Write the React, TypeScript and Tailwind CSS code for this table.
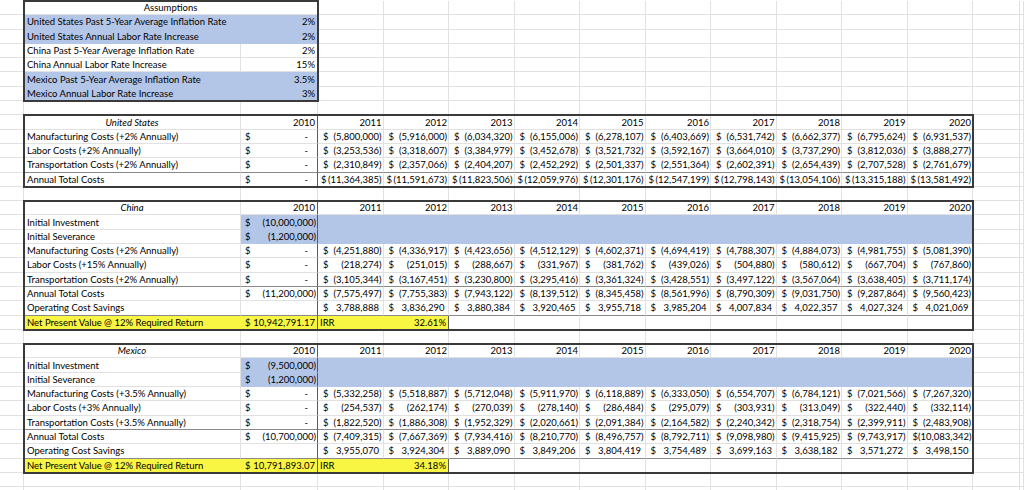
import React from "react";
import { twMerge } from "tailwind-merge";

const YEARS = [2011, 2012, 2013, 2014, 2015, 2016, 2017, 2018, 2019, 2020];
const BLUE = "bg-[#b4c6e7] border-[#b4c6e7]";
const YELLOW = "bg-[#f9f643] border-[#f9f643]";
const SPLIT = "border-r-[#5a5a5a]";
const RULE = "border-b-[#8a8a8a]";
const TABLE =
  "grid grid-cols-[217px_77px_repeat(10,65.5px)] auto-rows-[14.3px] bg-white outline-2 -outline-offset-1 outline-[#3a3a3a]";

type Money = number | "-" | string;

type Country = {
  title: string;
  invest?: number;
  severance?: number;
  costs: { label: string; base: Money; vals: number[] }[];
  total: { base: Money; vals: number[] };
  savings?: number[];
  npv?: string;
  irr?: string;
};

const assumptions = [
  { label: "United States Past 5-Year Average Inflation Rate", value: "2%", blue: true },
  { label: "United States Annual Labor Rate Increase", value: "2%", blue: true },
  { label: "China Past 5-Year Average Inflation Rate", value: "2%", blue: false },
  { label: "China Annual Labor Rate Increase", value: "15%", blue: false },
  { label: "Mexico Past 5-Year Average Inflation Rate", value: "3.5%", blue: true },
  { label: "Mexico Annual Labor Rate Increase", value: "3%", blue: true },
];

const neg = (xs: number[]) => xs.map((x) => -x);

const unitedStates: Country = {
  title: "United States",
  costs: [
    {
      label: "Manufacturing Costs (+2% Annually)",
      base: "-",
      vals: neg([5800000, 5916000, 6034320, 6155006, 6278107, 6403669, 6531742, 6662377, 6795624, 6931537]),
    },
    {
      label: "Labor Costs (+2% Annually)",
      base: "-",
      vals: neg([3253536, 3318607, 3384979, 3452678, 3521732, 3592167, 3664010, 3737290, 3812036, 3888277]),
    },
    {
      label: "Transportation Costs (+2% Annually)",
      base: "-",
      vals: neg([2310849, 2357066, 2404207, 2452292, 2501337, 2551364, 2602391, 2654439, 2707528, 2761679]),
    },
  ],
  total: {
    base: "-",
    vals: neg([11364385, 11591673, 11823506, 12059976, 12301176, 12547199, 12798143, 13054106, 13315188, 13581492]),
  },
};

const china: Country = {
  title: "China",
  invest: -10000000,
  severance: -1200000,
  costs: [
    {
      label: "Manufacturing Costs (+2% Annually)",
      base: "-",
      vals: neg([4251880, 4336917, 4423656, 4512129, 4602371, 4694419, 4788307, 4884073, 4981755, 5081390]),
    },
    {
      label: "Labor Costs (+15% Annually)",
      base: "-",
      vals: neg([218274, 251015, 288667, 331967, 381762, 439026, 504880, 580612, 667704, 767860]),
    },
    {
      label: "Transportation Costs (+2% Annually)",
      base: "-",
      vals: neg([3105344, 3167451, 3230800, 3295416, 3361324, 3428551, 3497122, 3567064, 3638405, 3711174]),
    },
  ],
  total: {
    base: -11200000,
    vals: neg([7575497, 7755383, 7943122, 8139512, 8345458, 8561996, 8790309, 9031750, 9287864, 9560423]),
  },
  savings: [3788888, 3836290, 3880384, 3920465, 3955718, 3985204, 4007834, 4022357, 4027324, 4021069],
  npv: "10,942,791.17",
  irr: "32.61%",
};

const mexico: Country = {
  title: "Mexico",
  invest: -9500000,
  severance: -1200000,
  costs: [
    {
      label: "Manufacturing Costs (+3.5% Annually)",
      base: "-",
      vals: neg([5332258, 5518887, 5712048, 5911970, 6118889, 6333050, 6554707, 6784121, 7021566, 7267320]),
    },
    {
      label: "Labor Costs (+3% Annually)",
      base: "-",
      vals: neg([254537, 262174, 270039, 278140, 286484, 295079, 303931, 313049, 322440, 332114]),
    },
    {
      label: "Transportation Costs (+3.5% Annually)",
      base: "-",
      vals: neg([1822520, 1886308, 1952329, 2020661, 2091384, 2164582, 2240342, 2318754, 2399911, 2483908]),
    },
  ],
  total: {
    base: -10700000,
    vals: neg([7409315, 7667369, 7934416, 8210770, 8496757, 8792711, 9098980, 9415925, 9743917, 10083342]),
  },
  savings: [3955070, 3924304, 3889090, 3849206, 3804419, 3754489, 3699163, 3638182, 3571272, 3498150],
  npv: "10,791,893.07",
  irr: "34.18%",
};

function Cell({ className, children }: { className?: string; children?: React.ReactNode }) {
  return (
    <div
      className={twMerge(
        "flex min-w-0 items-center whitespace-nowrap border-r border-b border-[#e1e1e1] px-[3px]",
        className
      )}
    >
      {children}
    </div>
  );
}

// Excel accounting format: "$" pinned left, figure right, padding where ")" would be
function MoneyCell({ v, className }: { v?: Money; className?: string }) {
  if (v === undefined) return <Cell className={className} />;
  let body: React.ReactNode;
  if (v === "-") body = <span className="pr-[8px]">-</span>;
  else if (typeof v === "string") body = <span>{v}</span>;
  else if (v < 0) body = <span>({Math.abs(v).toLocaleString("en-US")})</span>;
  else
    body = (
      <span>
        {v.toLocaleString("en-US")}
        <span className="invisible">)</span>
      </span>
    );
  return (
    <Cell className={twMerge("justify-between pl-[5px] pr-[1px]", className)}>
      <span>$</span>
      {body}
    </Cell>
  );
}

function CountryTable({ c, className }: { c: Country; className: string }) {
  const hasSavings = !!c.savings;
  return (
    <div className={twMerge(TABLE, className)}>
      <Cell className="justify-center italic">{c.title}</Cell>
      <Cell className={`justify-end pr-[2px] ${SPLIT}`}>2010</Cell>
      {YEARS.map((y) => (
        <Cell key={y} className="justify-end pr-[1px]">
          {y}
        </Cell>
      ))}

      {c.invest !== undefined && (
        <>
          <Cell>Initial Investment</Cell>
          <MoneyCell v={c.invest} className={`${BLUE} ${SPLIT} pl-[4px]`} />
          {YEARS.map((y) => (
            <Cell key={y} className={BLUE} />
          ))}
          <Cell>Initial Severance</Cell>
          <MoneyCell v={c.severance} className={`${BLUE} ${SPLIT} pl-[4px]`} />
          {YEARS.map((y) => (
            <Cell key={y} className={BLUE} />
          ))}
        </>
      )}

      {c.costs.map((row, i) => {
        const line = i === c.costs.length - 1 ? RULE : "";
        return (
          <React.Fragment key={row.label}>
            <Cell className={line}>{row.label}</Cell>
            <MoneyCell v={row.base} className={`${SPLIT} ${line} pl-[4px]`} />
            {row.vals.map((v, j) => (
              <MoneyCell key={j} v={v} className={line} />
            ))}
          </React.Fragment>
        );
      })}

      <Cell>Annual Total Costs</Cell>
      <MoneyCell v={c.total.base} className={`${SPLIT} pl-[4px]`} />
      {c.total.vals.map((v, j) => (
        <MoneyCell key={j} v={v} className={hasSavings ? "" : "pl-[3px]"} />
      ))}

      {c.savings && (
        <>
          <Cell className={RULE}>Operating Cost Savings</Cell>
          <Cell className={`${SPLIT} ${RULE}`} />
          {c.savings.map((v, j) => (
            <MoneyCell key={j} v={v} className={RULE} />
          ))}

          <Cell className={YELLOW}>Net Present Value @ 12% Required Return</Cell>
          <MoneyCell v={c.npv} className={`${YELLOW} ${SPLIT} pl-[4px] pr-[2px]`} />
          <Cell className={`${YELLOW} ${SPLIT} col-span-2 justify-between pl-[2px] pr-[2px]`}>
            <span>IRR</span>
            <span>{c.irr}</span>
          </Cell>
          {YEARS.slice(2).map((y) => (
            <Cell key={y} />
          ))}
        </>
      )}
    </div>
  );
}

export default function App() {
  // 15 columns x 35 rows of sheet, minus the cells covered by the four tables
  const blanks = 15 * 35 - (2 * 7 + 12 * 5 + 12 * 9 + 12 * 9);

  return (
    <div className="h-[490px] overflow-hidden bg-white pt-px font-['Lato',sans-serif] text-[9.5px] leading-[13px] text-black">
      <div className="grid grid-cols-[24px_217px_77px_repeat(10,65.5px)_47px_1fr] auto-rows-[14.3px]">
        {Array.from({ length: blanks }).map((_, i) => (
          <div key={i} className="border-r border-b border-[#e1e1e1]" />
        ))}

        <div className="col-start-2 col-span-2 row-start-1 row-span-7 grid grid-cols-[217px_77px] auto-rows-[14.3px] bg-white outline-2 -outline-offset-1 outline-[#3a3a3a]">
          <Cell className="col-span-2 justify-center">Assumptions</Cell>
          {assumptions.map((a) => (
            <React.Fragment key={a.label}>
              <Cell className={a.blue ? BLUE : ""}>{a.label}</Cell>
              <Cell className={twMerge("justify-end pr-[2px]", a.blue ? BLUE : "")}>{a.value}</Cell>
            </React.Fragment>
          ))}
        </div>

        <CountryTable c={unitedStates} className="col-start-2 col-span-12 row-start-9 row-span-5" />
        <CountryTable c={china} className="col-start-2 col-span-12 row-start-15 row-span-9" />
        <CountryTable c={mexico} className="col-start-2 col-span-12 row-start-25 row-span-9" />
      </div>
    </div>
  );
}
